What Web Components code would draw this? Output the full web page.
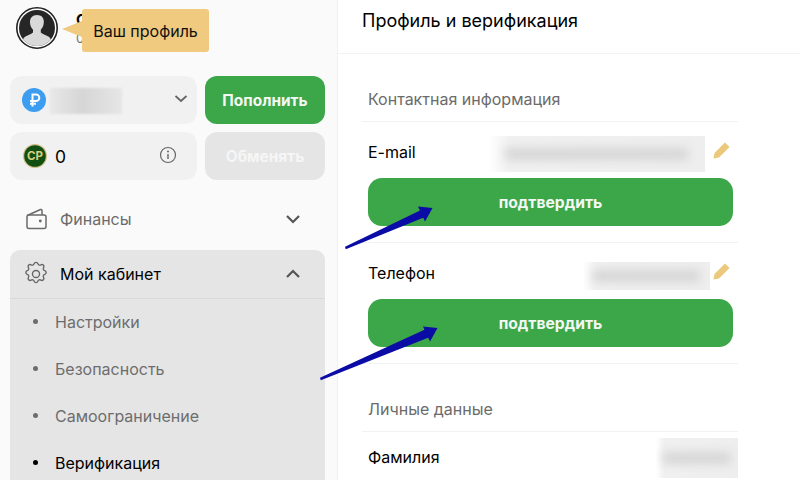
<!DOCTYPE html>
<html lang="ru">
<head>
<meta charset="utf-8">
<title>Профиль и верификация</title>
<style>
    html, body { margin: 0; height: 100%; }
    body { font-family: Inter, "Liberation Sans", sans-serif; overflow: hidden; }
</style>
</head>
<body>
<cabinet-page>
    <side-bar slot="side">
        <user-head></user-head>
        <balance-box></balance-box>
        <nav-link label="Финансы"></nav-link>
        <nav-group label="Мой кабинет">
            <sub-item>Настройки</sub-item>
            <sub-item>Безопасность</sub-item>
            <sub-item>Самоограничение</sub-item>
            <sub-item active>Верификация</sub-item>
        </nav-group>
    </side-bar>
    <profile-panel slot="main">
        <section-title>Контактная информация</section-title>
        <field-row label="E-mail" blur="217" blur-h="36" drop="5" gap="8" editable confirm></field-row>
        <field-row label="Телефон" blur="127" blur-h="28" drop="7" gap="3" editable confirm></field-row>
        <section-title>Личные данные</section-title>
        <field-row label="Фамилия" blur="82" blur-h="40" drop="2"></field-row>
    </profile-panel>
    <pointer-arrows slot="over"></pointer-arrows>
</cabinet-page>

<script>
class CabinetPage extends HTMLElement {
    constructor() {
        super();
        this.attachShadow({ mode: 'open' });
        this.shadowRoot.innerHTML = `
            <style>
                :host {
                    display: grid;
                    grid-template-columns: 338px 1fr;
                    position: relative;
                    width: 800px;
                    height: 480px;
                    overflow: hidden;
                    background: #fff;
                }
            </style>
            <slot name="side"></slot>
            <slot name="main"></slot>
            <slot name="over"></slot>
        `;
    }
}

class SideBar extends HTMLElement {
    constructor() {
        super();
        this.attachShadow({ mode: 'open' });
        this.shadowRoot.innerHTML = `
            <style>
                :host {
                    display: block;
                    height: 480px;
                    box-sizing: border-box;
                    background: #fafafa;
                    border-right: 1px solid #f1f1f1;
                    padding: 0 12px 0 10px;
                }
            </style>
            <slot></slot>
        `;
    }
}

class UserHead extends HTMLElement {
    constructor() {
        super();
        this.attachShadow({ mode: 'open' });
        this.shadowRoot.innerHTML = `
            <style>
                :host {
                    display: flex;
                    align-items: flex-start;
                    height: 76px;
                    box-sizing: border-box;
                    padding: 7px 0 0 6px;
                    position: relative;
                }
                svg { width: 42px; height: 42px; flex: none; }
                .name {
                    margin: 4px 0 0 18px;
                    font-size: 15px;
                    line-height: 18px;
                    font-weight: 700;
                    color: #000;
                }
                .sub { margin: 1px 0 0 18px; font-size: 13px; color: #777; }
                .tip {
                    position: absolute;
                    left: 72px;
                    top: 9px;
                    width: 127px;
                    height: 43px;
                    display: flex;
                    align-items: center;
                    justify-content: center;
                    background: #efca7f;
                    border-radius: 3px;
                    font-size: 16px;
                    color: #111;
                }
                .tip::before {
                    content: '';
                    position: absolute;
                    left: -20px;
                    top: 12px;
                    border: 8px solid transparent;
                    border-left: 0;
                    border-right: 20px solid #efca7f;
                }
            </style>
            <svg viewBox="0 0 42 42">
                <circle cx="21" cy="21" r="20.200" fill="#fff" stroke="#222" stroke-width="1.600"/>
                <circle cx="21" cy="21" r="18" fill="#262626"/>
                <clipPath id="c"><circle cx="21" cy="21" r="18"/></clipPath>
                <path clip-path="url(#c)" fill="#d9d9d9" d="M21 8c-4.800 0-7.200 3.200-7 7.600.1 3 1.400 5.600 3 7.200v2.600c-1.200 1.600-5 2.600-7.600 4-1.400.8-2.200 2-2.600 3.600L6 42h30l-1-9c-.4-1.600-1.200-2.800-2.600-3.600-2.600-1.400-6.400-2.400-7.600-4v-2.600c1.600-1.600 2.900-4.200 3-7.200C28.200 11.200 25.800 8 21 8z"/>
            </svg>
            <div>
                <div class="name">С</div>
                <div class="sub">0</div>
            </div>
            <div class="tip">Ваш профиль</div>
        `;
    }
}

class BalanceBox extends HTMLElement {
    constructor() {
        super();
        this.attachShadow({ mode: 'open' });
        this.shadowRoot.innerHTML = `
            <style>
                :host {
                    display: grid;
                    grid-template-columns: 187px 120px;
                    grid-auto-rows: 48px;
                    gap: 8px;
                    font-size: 15px;
                }
                .cell {
                    display: flex;
                    align-items: center;
                    background: #f1f1f1;
                    border-radius: 12px;
                    padding-left: 12px;
                    position: relative;
                }
                .rub { width: 24px; height: 24px; flex: none; }
                .amount {
                    width: 72px;
                    height: 26px;
                    margin: 1px 0 0 4px;
                    background: linear-gradient(90deg, #e8e8e8, #d6d6d6 45%, #e6e6e6);
                    filter: blur(1px);
                }
                .chev { position: absolute; left: 164px; top: 18px; }
                .cp { width: 24px; height: 24px; flex: none; margin-left: 1px; }
                .zero { margin-left: 8px; font-size: 17.500px; color: #000; }
                .info { position: absolute; left: 148px; top: 13px; }
                .btn {
                    display: flex;
                    align-items: center;
                    justify-content: center;
                    border-radius: 12px;
                    font-weight: 700;
                    font-size: 15.400px;
                }
                .pay { background: #3ba748; color: #f4f8f4; }
                .swap { background: #e5e5e5; color: #f6f6f6; }
            </style>
            <div class="cell">
                <svg class="rub" viewBox="0 0 24 24">
                    <circle cx="12" cy="12" r="12" fill="#3d9df0"/>
                    <path d="M10.500 18.500V6.500h3.500a3.300 3.300 0 0 1 0 6.600H8M8 15.800h6" fill="none" stroke="#fff" stroke-width="2"/>
                </svg>
                <div class="amount"></div>
                <svg class="chev" width="14" height="10" viewBox="0 0 14 10"><path d="M1.500 2l5.500 5 5.500-5" fill="none" stroke="#666" stroke-width="1.800"/></svg>
            </div>
            <div class="btn pay">Пополнить</div>
            <div class="cell">
                <svg class="cp" viewBox="0 0 24 24">
                    <circle cx="12" cy="12" r="12" fill="#cdbf85"/>
                    <circle cx="12" cy="12" r="10.800" fill="#124f12"/>
                    <text x="12" y="16" text-anchor="middle" font-family="Inter, sans-serif" font-size="11.500" font-weight="700" fill="#d8cf80">CP</text>
                </svg>
                <span class="zero">0</span>
                <svg class="info" width="20" height="20" viewBox="0 0 20 20">
                    <circle cx="10" cy="10" r="7.500" fill="none" stroke="#666" stroke-width="1.200"/>
                    <path d="M10 9v5" stroke="#666" stroke-width="1.400"/>
                    <circle cx="10" cy="6.500" r="1" fill="#666"/>
                </svg>
            </div>
            <div class="btn swap">Обменять</div>
        `;
    }
}

const WALLET_ICON = `
    <svg width="22" height="22" viewBox="0 0 22 22" fill="none" stroke="#6b6b6b" stroke-width="1.500" stroke-linejoin="round">
        <rect x="1" y="7" width="19" height="13.500" rx="2"/>
        <path d="M1.200 7.500L14.500 1.500q1.500-.4 1.500 1V7"/>
        <circle cx="14.300" cy="13" r=".7" fill="#6b6b6b"/>
    </svg>`;

const GEAR_ICON = `
    <svg width="22" height="22" viewBox="2 2 20 20" fill="none" stroke="#666" stroke-width="1.250" stroke-linejoin="round" overflow="visible">
        <path d="M10.300 2.600a1.800 1.800 0 0 1 3.400 0 1.800 1.800 0 0 0 2.700 1.100 1.800 1.800 0 0 1 2.500 2.500 1.800 1.800 0 0 0 1.100 2.700 1.800 1.800 0 0 1 0 3.400 1.800 1.800 0 0 0-1.100 2.700 1.800 1.800 0 0 1-2.500 2.500 1.800 1.800 0 0 0-2.700 1.100 1.800 1.800 0 0 1-3.400 0 1.800 1.800 0 0 0-2.700-1.100 1.800 1.800 0 0 1-2.500-2.500 1.800 1.800 0 0 0-1.100-2.700 1.800 1.800 0 0 1 0-3.400 1.800 1.800 0 0 0 1.100-2.700 1.800 1.800 0 0 1 2.500-2.500 1.800 1.800 0 0 0 2.700-1.100z"/>
        <circle cx="12" cy="12" r="3.200"/>
    </svg>`;

class NavLink extends HTMLElement {
    constructor() {
        super();
        this.attachShadow({ mode: 'open' });
    }

    connectedCallback() {
        this.shadowRoot.innerHTML = `
            <style>
                :host {
                    display: flex;
                    align-items: center;
                    height: 48px;
                    margin: 15px 0 7px;
                    padding-left: 16px;
                    position: relative;
                    font-size: 16px;
                    color: #6b6b6b;
                }
                span { margin-left: 12px; }
                .chev { position: absolute; left: 275px; top: 19px; }
            </style>
            ${WALLET_ICON}
            <span>${this.getAttribute('label')}</span>
            <svg class="chev" width="16" height="11" viewBox="0 0 16 11"><path d="M2 2l6 6 6-6" fill="none" stroke="#555" stroke-width="2.200"/></svg>
        `;
    }
}

class NavGroup extends HTMLElement {
    constructor() {
        super();
        this.attachShadow({ mode: 'open' });
    }

    connectedCallback() {
        this.shadowRoot.innerHTML = `
            <style>
                :host {
                    display: block;
                    width: 315px;
                    background: #e5e5e5;
                    border-radius: 10px 10px 0 0;
                }
                .head {
                    display: flex;
                    align-items: center;
                    height: 48px;
                    padding-left: 15px;
                    border-bottom: 1px solid #d9d9d9;
                    position: relative;
                    font-size: 16px;
                    color: #000;
                }
                .head span { margin-left: 13px; }
                .chev { position: absolute; left: 275px; top: 18px; }
            </style>
            <div class="head">
                ${GEAR_ICON}
                <span>${this.getAttribute('label')}</span>
                <svg class="chev" width="16" height="11" viewBox="0 0 16 11"><path d="M2 9l6-6 6 6" fill="none" stroke="#555" stroke-width="2.200"/></svg>
            </div>
            <slot></slot>
        `;
    }
}

class SubItem extends HTMLElement {
    constructor() {
        super();
        this.attachShadow({ mode: 'open' });
        this.shadowRoot.innerHTML = `
            <style>
                :host {
                    display: flex;
                    align-items: center;
                    height: 47px;
                    box-sizing: border-box;
                    padding: 0 0 2px 23px;
                    font-size: 16px;
                    color: #6d6d6d;
                }
                :host([active]) { color: #000; }
                i {
                    width: 5px;
                    height: 5px;
                    border-radius: 50%;
                    background: currentColor;
                    margin-right: 17px;
                }
            </style>
            <i></i><slot></slot>
        `;
    }
}

class ProfilePanel extends HTMLElement {
    constructor() {
        super();
        this.attachShadow({ mode: 'open' });
        this.shadowRoot.innerHTML = `
            <style>
                :host { display: block; height: 480px; background: #fff; }
                h1 {
                    margin: 0;
                    height: 54px;
                    box-sizing: border-box;
                    padding: 9px 0 0 24px;
                    border-bottom: 1px solid #f3f3f3;
                    font-size: 18px;
                    line-height: 24px;
                    font-weight: 400;
                    color: #000;
                }
                .body { width: 376px; margin-left: 24px; }
            </style>
            <h1>Профиль и верификация</h1>
            <div class="body"><slot></slot></div>
        `;
    }
}

class SectionTitle extends HTMLElement {
    constructor() {
        super();
        this.attachShadow({ mode: 'open' });
        this.shadowRoot.innerHTML = `
            <style>
                :host {
                    display: block;
                    height: 68px;
                    box-sizing: border-box;
                    padding: 33px 0 0 6px;
                    border-bottom: 1px solid #f2f2f2;
                    font-size: 16px;
                    line-height: 24px;
                    color: #6b6b6b;
                }
            </style>
            <slot></slot>
        `;
    }
}

class FieldRow extends HTMLElement {
    constructor() {
        super();
        this.attachShadow({ mode: 'open' });
    }

    connectedCallback() {
        const editable = this.hasAttribute('editable');
        const confirm = this.hasAttribute('confirm');
        this.shadowRoot.innerHTML = `
            <style>
                :host { display: block; padding-left: 6px; }
                :host([confirm]) { padding-bottom: 16px; border-bottom: 1px solid #f2f2f2; }
                .line {
                    display: flex;
                    align-items: center;
                    justify-content: space-between;
                    height: 50px;
                    font-size: 16px;
                    color: #000;
                }
                :host([confirm]) .line { height: 56px; box-sizing: border-box; padding-top: 3px; }
                .val { display: flex; align-items: center; }
                .mask {
                    width: ${this.getAttribute('blur')}px;
                    height: ${this.getAttribute('blur-h')}px;
                    margin-top: ${this.getAttribute('drop')}px;
                    background: linear-gradient(90deg, #fff, #f0f0f0 10%, #eeeeee);
                    overflow: hidden;
                    display: flex;
                    align-items: center;
                    justify-content: center;
                }
                .mask i {
                    display: block;
                    width: 84%;
                    height: 12px;
                    background: #d6d6d6;
                    filter: blur(5px);
                }
                svg { margin: -3px 8px 0 ${this.getAttribute('gap')}px; flex: none; }
                .go {
                    height: 48px;
                    width: 365px;
                    display: flex;
                    align-items: center;
                    justify-content: center;
                    background: #3ba748;
                    border-radius: 14px;
                    font-size: 15.700px;
                    font-weight: 700;
                    color: #f4f8f4;
                }
            </style>
            <div class="line">
                <span>${this.getAttribute('label')}</span>
                <div class="val">
                    <div class="mask"><i></i></div>
                    ${editable ? `<svg width="17" height="17" viewBox="0 0 17 17">
                        <path d="M12 .5l4.500 4.500L6 15.500.5 16.500l1-5.500z" fill="#ecc87c"/>
                    </svg>` : ''}
                </div>
            </div>
            ${confirm ? '<div class="go">подтвердить</div>' : ''}
        `;
    }
}

class PointerArrows extends HTMLElement {
    constructor() {
        super();
        this.attachShadow({ mode: 'open' });
        this.shadowRoot.innerHTML = `
            <style>
                :host { position: absolute; inset: 0; pointer-events: none; }
                svg { display: block; }
            </style>
            <svg width="800" height="480" viewBox="0 0 800 480">
                <path d="M345 246.800L345.800 249.200L425 217L420 210.500z" fill="#0b0ba5"/>
                <path d="M432.500 208L418 206.500L425 221.500z" fill="#0b0ba5"/>
                <path d="M320 377.800L320.800 380.200L430 337L425 329.500z" fill="#0b0ba5"/>
                <path d="M437.500 328L423 326.500L430 341.500z" fill="#0b0ba5"/>
            </svg>
        `;
    }
}

customElements.define('cabinet-page', CabinetPage);
customElements.define('side-bar', SideBar);
customElements.define('user-head', UserHead);
customElements.define('balance-box', BalanceBox);
customElements.define('nav-link', NavLink);
customElements.define('nav-group', NavGroup);
customElements.define('sub-item', SubItem);
customElements.define('profile-panel', ProfilePanel);
customElements.define('section-title', SectionTitle);
customElements.define('field-row', FieldRow);
customElements.define('pointer-arrows', PointerArrows);
</script>
</body>
</html>
